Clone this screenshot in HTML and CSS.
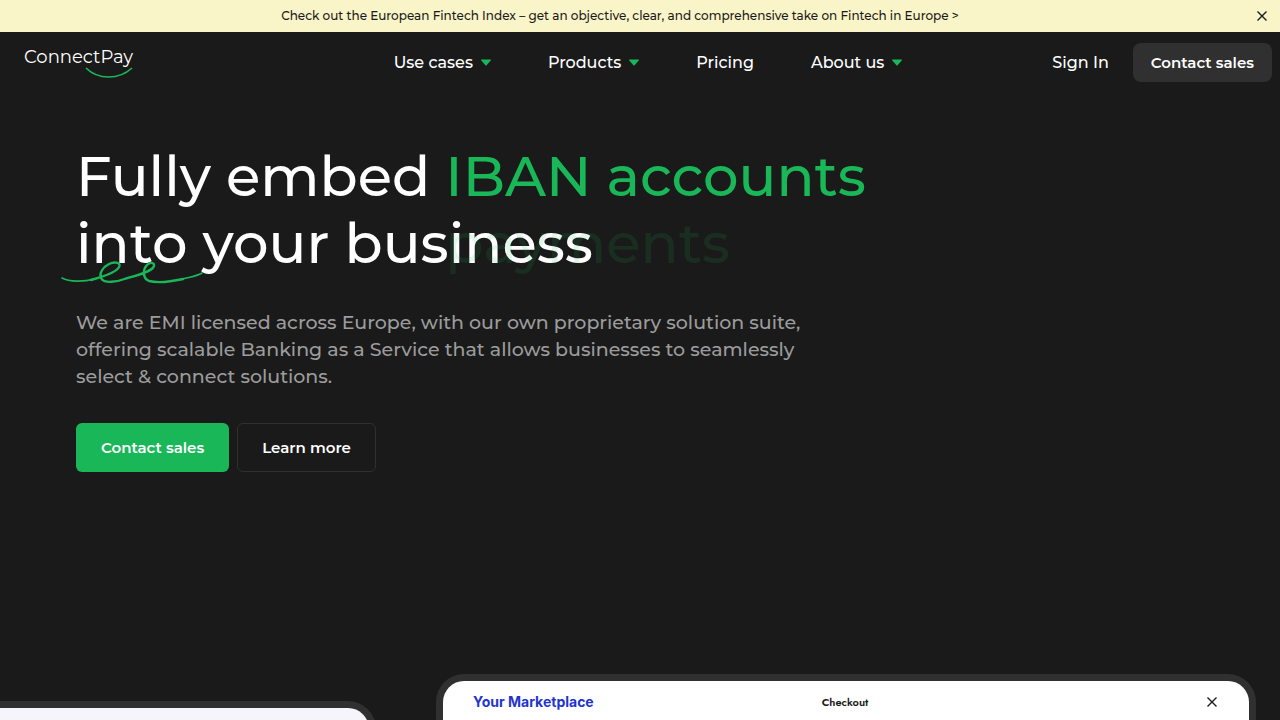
FILE: index.html
```html
<!DOCTYPE html>
<html lang="en">
<head>
    <meta charset="UTF-8">
    <meta name="viewport" content="width=device-width, initial-scale=1.0">
    <title>ConnectPay</title>
    <link rel="stylesheet" href="styles.css">
</head>
<body>
    <div class="banner">
        <a href="#">Check out the European Fintech Index – get an objective, clear, and comprehensive take on Fintech in Europe &gt;</a>
        <button class="close" type="button" aria-label="Close">
            <svg width="10" height="10" viewBox="0 0 10 10"><path d="M0.5 0.5L9.5 9.5M9.5 0.5L0.5 9.5"/></svg>
        </button>
    </div>

    <header class="header">
        <a class="logo" href="#">
            ConnectPay
            <svg class="smile" width="48" height="12" viewBox="0 0 48 12"><path d="M1 1C13 13 34 13 47 1"/></svg>
        </a>
        <nav class="nav">
            <a href="#">Use cases <svg width="10" height="8" viewBox="0 0 10 8"><path d="M0.400 1.500h9.200q0.600 0.200 0.300 0.800L5.600 7.200q-0.600 0.700-1.200 0L0.100 2.300q-0.300-0.600 0.300-0.800z"/></svg></a>
            <a href="#">Products <svg width="10" height="8" viewBox="0 0 10 8"><path d="M0.400 1.500h9.200q0.600 0.200 0.300 0.800L5.600 7.200q-0.600 0.700-1.200 0L0.100 2.300q-0.300-0.600 0.300-0.800z"/></svg></a>
            <a href="#">Pricing</a>
            <a href="#">About us <svg width="10" height="8" viewBox="0 0 10 8"><path d="M0.400 1.500h9.200q0.600 0.200 0.300 0.800L5.600 7.200q-0.600 0.700-1.200 0L0.100 2.300q-0.300-0.600 0.300-0.800z"/></svg></a>
        </nav>
        <div class="actions">
            <a href="#">Sign In</a>
            <button class="btn btn-dark" type="button">Contact sales</button>
        </div>
    </header>

    <main>
        <section class="hero">
            <h1>
                Fully embed <span class="rotator">IBAN accounts<span class="next">payments</span></span><br>
                <span class="underlined">into<svg class="squiggle" width="144" height="24" viewBox="0 0 144 24"><path class="thin" d="M1 17C8 21 23 21 33 18"/><path d="M30 19C41 16 57 11 58.500 5C59 1 53 0.500 48 3C42 6 38 12 40 17C43 23 56 21 65 17.500C74 15 91 11 93 5C93.500 1 89 1 86 4C82 8 81 17 88 20C98 22.500 113 20 122 18"/><path class="thin" d="M120 18.500C129 16 137 15 141 12"/></svg></span>
                your business
            </h1>
            <p>We are EMI licensed across Europe, with our own proprietary solution suite, offering scalable Banking as a Service that allows businesses to seamlessly select &amp; connect solutions.</p>
            <div class="buttons">
                <button class="btn btn-green" type="button">Contact sales</button>
                <button class="btn btn-outline" type="button">Learn more</button>
            </div>
        </section>

        <section class="showcase">
            <div class="device device-left"></div>
            <div class="device device-right">
                <div class="device-bar">
                    <strong class="shop">Your Marketplace</strong>
                    <span class="step">Checkout</span>
                    <button class="close" type="button" aria-label="Close checkout">
                        <svg width="10" height="10" viewBox="0 0 10 10"><path d="M0.5 0.5L9.5 9.5M9.5 0.5L0.5 9.5"/></svg>
                    </button>
                </div>
            </div>
        </section>
    </main>
</body>
</html>
```
FILE: styles.css
```css
* {
    box-sizing: border-box;
}
body {
    font-family: Montserrat, Inter, sans-serif;
    font-weight: 500;
    margin: 0;
    height: 100vh;
    display: flex;
    flex-direction: column;
    overflow: hidden;
    background-color: #1a1a1a;
    color: #fff;
}
a {
    color: inherit;
    text-decoration: none;
}
button {
    font-family: inherit;
    cursor: pointer;
}
.banner {
    display: flex;
    align-items: center;
    height: 32px;
    flex-shrink: 0;
    background-color: #faf5c8;
    color: #1a1a1a;
    font-size: 12px;
}
.banner a {
    flex: 1;
    text-align: center;
    padding-bottom: 2px;
}
.banner .close {
    padding: 0 13px 0 17px;
}
.close {
    display: flex;
    padding: 0;
    border: none;
    background: none;
}
.close path {
    fill: none;
    stroke: #1a1a1a;
    stroke-width: 1.4;
}
.header {
    display: grid;
    grid-template-columns: 1fr auto 1fr;
    align-items: center;
    height: 60px;
    flex-shrink: 0;
    padding: 0 8px 0 24px;
}
.logo {
    position: relative;
    justify-self: start;
    padding-bottom: 10px;
    font-size: 18px;
    font-weight: 400;
    line-height: 24px;
}
.smile {
    position: absolute;
    right: 0;
    bottom: 0;
}
.smile path {
    fill: none;
    stroke: #1ab759;
    stroke-width: 1.7;
}
.nav {
    display: flex;
    gap: 57px;
    font-size: 16px;
}
.nav a {
    display: flex;
    align-items: center;
    gap: 8px;
}
.nav path {
    fill: #1ab759;
}
.actions {
    display: flex;
    justify-content: flex-end;
    align-items: center;
    gap: 24px;
    font-size: 16px;
}
.btn {
    border: 1px solid transparent;
    border-radius: 6px;
    padding: 0 24px;
    height: 49px;
    color: #fff;
    font-size: 15px;
    font-weight: 600;
}
.btn-dark {
    height: 39px;
    padding: 0 17px;
    border-radius: 8px;
    background-color: #303030;
}
.btn-green {
    background-color: #1ab759;
}
.btn-outline {
    border-color: #303030;
    background: none;
}
main {
    flex: 1;
    display: flex;
    flex-direction: column;
    min-height: 0;
}
.hero {
    padding: 51px 76px 0;
}
h1 {
    margin: 0;
    font-size: 56px;
    font-weight: 500;
    line-height: 67px;
}
.rotator {
    position: relative;
    color: #1ab759;
}
/* next word sliding in from below */
.next {
    position: absolute;
    top: 100%;
    left: 0;
    z-index: 1;
    opacity: 0.12;
}
.underlined {
    position: relative;
}
.squiggle {
    position: absolute;
    left: -15px;
    bottom: -8px;
}
.squiggle path {
    fill: none;
    stroke: #1ab759;
    stroke-width: 2.4;
    stroke-linecap: round;
}
.squiggle .thin {
    stroke-width: 1.6;
}
.hero p {
    max-width: 740px;
    margin: 32px 0 33px;
    font-size: 19px;
    line-height: 27px;
    color: #9c9c9c;
}
.buttons {
    display: flex;
    gap: 8px;
}
.showcase {
    display: grid;
    grid-template-columns: 376fr 820fr;
    align-items: start;
    gap: 60px;
    margin-top: auto;
    height: 46px;
    padding-right: 24px;
    overflow: hidden;
}
.device {
    height: 80px;
    border: 7px solid #303030;
    border-bottom: none;
    border-radius: 28px 28px 0 0;
    background-color: #fff;
}
.device-left {
    margin-top: 27px;
    border-left: none;
    border-radius: 0 28px 0 0;
    background-color: #f6f5fc;
}
.device-bar {
    display: grid;
    grid-template-columns: 1fr auto 1fr;
    align-items: center;
    padding: 12px 32px 0 30px;
    color: #1a1a1a;
}
.device-bar .close {
    justify-self: end;
}
.shop {
    font-family: Inter, sans-serif;
    font-size: 14px;
    color: #1f35cf;
}
.step {
    font-family: Jost, Lato, sans-serif;
    font-size: 11px;
    font-weight: 600;
}
```
